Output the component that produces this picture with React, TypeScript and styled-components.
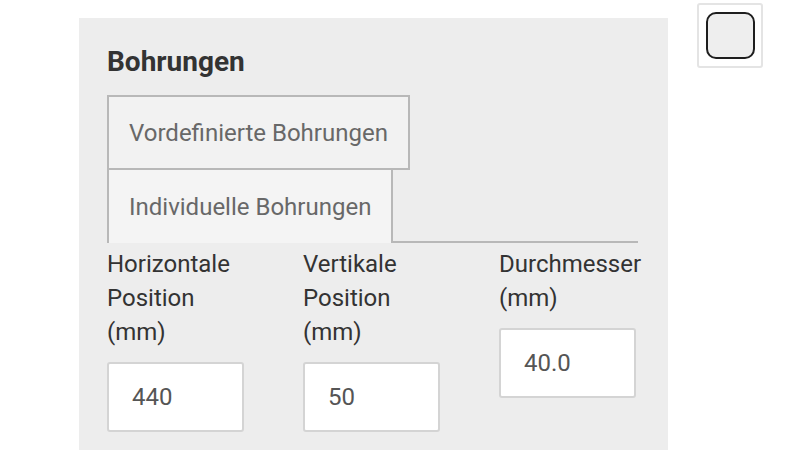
import styled, { createGlobalStyle } from 'styled-components'

const GlobalStyle = createGlobalStyle`
    html, body {
        margin: 0;
        padding: 0;
        background: #ffffff;
        font-family: Roboto, "Liberation Sans", sans-serif;
        overflow: hidden;
    }
`

const Page = styled.div`
    display: flex;
    align-items: flex-start;
    padding-left: 79px;
    height: 450px;
    overflow: hidden;
`

const Panel = styled.section`
    width: 589px;
    margin-top: 18px;
    min-height: 432px;
    box-sizing: border-box;
    padding: 26px 0 0 28px;
    background: #ededed;
`

const Heading = styled.h2`
    margin: 0 0 15px;
    font-size: 28px;
    line-height: 36px;
    font-weight: 700;
    color: #333333;
`

const TabList = styled.div`
    display: flex;
    flex-wrap: wrap;
    width: 531px;
    border-bottom: 2px solid #b8b8b8;
`

const Tab = styled.div<{ $active?: boolean; $width: number }>`
    box-sizing: border-box;
    width: ${p => p.$width}px;
    height: 75px;
    padding-left: 20px;
    display: flex;
    align-items: center;
    font-size: 24px;
    color: #686868;
    background: ${p => (p.$active ? '#f4f4f4' : '#f2f2f2')};
    border: 2px solid #b8b8b8;
    border-bottom: ${p => (p.$active ? 'none' : '2px solid #b8b8b8')};
    margin-top: ${p => (p.$active ? '-2px' : '0')};
    margin-bottom: ${p => (p.$active ? '-2px' : '0')};
`

const Fields = styled.div`
    display: grid;
    grid-template-columns: repeat(3, 137px);
    column-gap: 59px;
    align-items: start;
    padding-top: 4px;
`

const Field = styled.label`
    display: flex;
    flex-direction: column;
`

const Label = styled.span`
    font-size: 24px;
    line-height: 34px;
    color: #333333;
`

const Input = styled.input`
    box-sizing: border-box;
    width: 137px;
    height: 70px;
    margin-top: 13px;
    padding: 0 0 0 23px;
    border: 2px solid #d4d4d4;
    border-radius: 3px;
    background: #ffffff;
    font-family: Roboto, "Liberation Sans", sans-serif;
    font-size: 24px;
    color: #555555;
    outline: none;
`

const CheckOuter = styled.div`
    margin: 3px 0 0 29px;
    box-sizing: border-box;
    width: 66px;
    height: 65px;
    display: flex;
    align-items: center;
    justify-content: center;
    background: #ffffff;
    border: 2px solid #e4e4e4;
    border-radius: 3px;
`

const CheckInner = styled.span`
    box-sizing: border-box;
    width: 49px;
    height: 47px;
    background: #eeeeee;
    border: 2px solid #1e1e1e;
    border-radius: 10px;
`

const fields = [
    { label: 'Horizontale Position (mm)', value: '440' },
    { label: 'Vertikale Position (mm)', value: '50' },
    { label: 'Durchmesser (mm)', value: '40.0' },
]

const App = () => {
    return (
        <>
            <GlobalStyle />
            <Page>
                <Panel>
                    <Heading>Bohrungen</Heading>
                    <TabList>
                        <Tab $width={303}>Vordefinierte Bohrungen</Tab>
                        <Tab $width={286} $active>Individuelle Bohrungen</Tab>
                    </TabList>
                    <Fields>
                        {fields.map(f => (
                            <Field key={f.label}>
                                <Label>{f.label}</Label>
                                <Input defaultValue={f.value} />
                            </Field>
                        ))}
                    </Fields>
                </Panel>
                <CheckOuter>
                    <CheckInner />
                </CheckOuter>
            </Page>
        </>
    )
}

export default App
